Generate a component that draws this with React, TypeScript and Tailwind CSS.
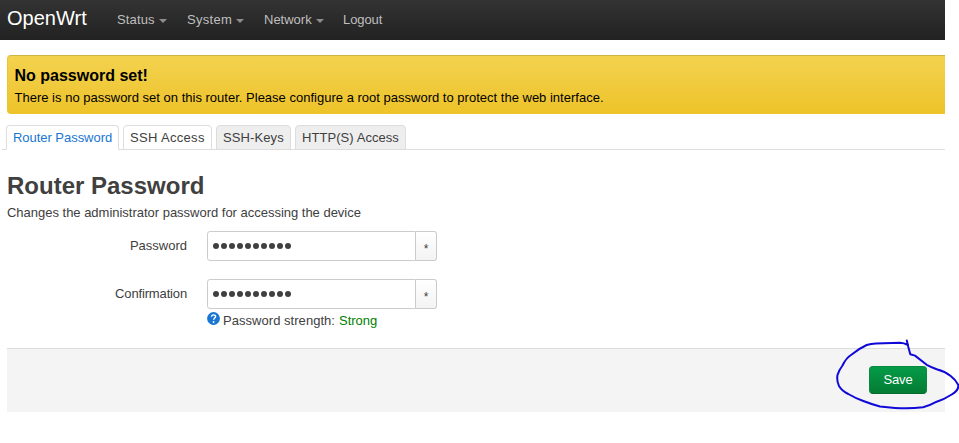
import React from 'react';

function NavItem({ label, caret = true, className }: { label: string; caret?: boolean; className: string }) {
  return (
    <a href="#" className={`flex h-10 shrink-0 items-center whitespace-nowrap text-[#bfbfbf] ${className}`}>
      {label}
      {caret && (
        <span className="ml-1 mt-px border-x-4 border-t-4 border-x-transparent border-t-[#8d8d8d]" />
      )}
    </a>
  );
}

function Tab({ label, className }: { label: string; className: string }) {
  return (
    <li
      className={`h-[25px] shrink-0 whitespace-nowrap rounded-t-[4px] border border-[#ddd] pl-1.5 leading-[24px] ${className}`}
    >
      {label}
    </li>
  );
}

function PasswordField({ label, labelClass }: { label: string; labelClass: string }) {
  return (
    <div className="flex h-[30px]">
      <label className={`w-[180px] text-right leading-[29px] ${labelClass}`}>{label}</label>
      <div className="ml-5 flex h-[30px] w-[209px] items-center gap-[2px] rounded-l-[3px] border border-[#ccc] pl-[5px]">
        {Array.from({ length: 10 }, (_, i) => (
          <span key={i} className="size-1.5 rounded-full bg-[#404040]" />
        ))}
      </div>
      <button className="h-[30px] w-[21px] rounded-r-[3px] border border-l-0 border-[#ccc] bg-linear-to-b from-white to-[#f3f3f3] pt-1.5 text-[12px] leading-[20px] text-[#404040]">
        *
      </button>
    </div>
  );
}

export default function App() {
  return (
    <div className="relative h-[443px] w-[959px] overflow-hidden bg-white font-['Liberation_Sans',Arial,sans-serif] text-[13px] text-[#404040]">
      <div className="w-[945px]">
        <header className="flex h-10 bg-linear-to-b from-[#333] to-[#222] pl-[7px]">
          <a href="#" className="w-[110px] text-[20px] leading-[36px] tracking-[0.02px] text-white">
            OpenWrt
          </a>
          <nav className="flex">
            <NavItem label="Status" className="w-[70px] tracking-[0.15px]" />
            <NavItem label="System" className="w-[77px] tracking-[0.3px]" />
            <NavItem label="Network" className="w-[79px]" />
            <NavItem label="Logout" caret={false} className="w-[60px] tracking-[-0.1px]" />
          </nav>
        </header>

        <section className="ml-[7px] mt-[15px] h-[59px] rounded-l-[4px] border border-r-0 border-[#eec52b] border-t-[#cdb542] bg-linear-to-b from-[#f3d24e] to-[#eec328] pl-[6.5px] pt-[9px] text-black">
          <h4 className="text-[16px] font-bold leading-[22px]">No password set!</h4>
          <p className="leading-[22px] tracking-[0.008px]">
            There is no password set on this router. Please configure a root password to protect the web interface.
          </p>
        </section>

        <ul className="ml-[2px] mt-[11px] flex h-[25px] gap-1 border-b border-[#ddd] pl-1">
          <Tab label="Router Password" className="w-[113px] border-b-white bg-white text-[#1976d2] tracking-[-0.04px]" />
          <Tab label="SSH Access" className="w-[89px] bg-white tracking-[0.32px]" />
          <Tab label="SSH-Keys" className="w-[75px] bg-[#eee] tracking-[0.1px]" />
          <Tab label="HTTP(S) Access" className="w-[111px] bg-[#eee] tracking-[0.06px]" />
        </ul>

        <main className="ml-[7px]">
          <h2 className="pt-[18px] text-[24px] font-bold leading-[36px]">Router Password</h2>
          <p className="leading-[18px] tracking-[-0.015px]">Changes the administrator password for accessing the device</p>
          <div className="mt-[9px] flex flex-col gap-[18px]">
            <PasswordField label="Password" labelClass="" />
            <PasswordField label="Confirmation" labelClass="tracking-[-0.15px]" />
          </div>
          <div className="ml-[200px] flex h-[22px] items-center">
            <svg viewBox="0 0 13 13" className="mb-1 size-[13px]">
              <circle cx="6.5" cy="6.5" r="6.4" fill="#1976d2" />
              <path d="M4.5 4.8C4.6 2.3 8.7 2.3 8.6 4.7C8.5 6 6.6 6.1 6.6 7.8" fill="none" stroke="white" strokeWidth="1.4" />
              <circle cx="6.6" cy="10" r="0.9" fill="white" />
            </svg>
            <span className="ml-[3px] mt-[2px] tracking-[0.04px]">Password strength:</span>
            <span className="ml-1 mt-[2px] text-[#008000]">Strong</span>
          </div>
          <footer className="mt-[17px] flex h-16 justify-end border-t border-[#ddd] bg-[#f4f4f4] pr-[18px] pt-[17px]">
            <button className="h-[28px] w-[58px] rounded-[4px] border border-[#078a3c] border-b-[#046b2c] bg-linear-to-b from-[#049b48] to-[#047c34] pb-px leading-[24px] tracking-[-0.2px] text-white">
              Save
            </button>
          </footer>
        </main>
      </div>

      <svg className="pointer-events-none absolute left-0 top-0 h-[443px] w-[959px]" viewBox="0 0 959 443">
        <path
          d="M906.8 340.5L908.3 347L910.3 354.2L915 355.6L926.7 364.8Q932 367.5 936.7 369.3Q945 371.5 950.7 376Q956 380 958.3 385Q959 390 951.7 394.5Q944 399.5 936.7 401.7Q930 405.5 923 407.3Q909 409 895 407.9L880 406.5Q871 404 863.3 401Q855 398 848.3 394Q842 391 839 386Q836.5 381 837.5 375Q839 370 842.5 365.5Q846 358 851.7 354.5Q859 348.5 866.7 345Q871 343.5 876 343.4L900 342.7Q904 342.8 908 345"
          fill="none"
          stroke="#1008d8"
          strokeWidth="2"
          strokeLinejoin="round"
          strokeLinecap="round"
        />
      </svg>
    </div>
  );
}
